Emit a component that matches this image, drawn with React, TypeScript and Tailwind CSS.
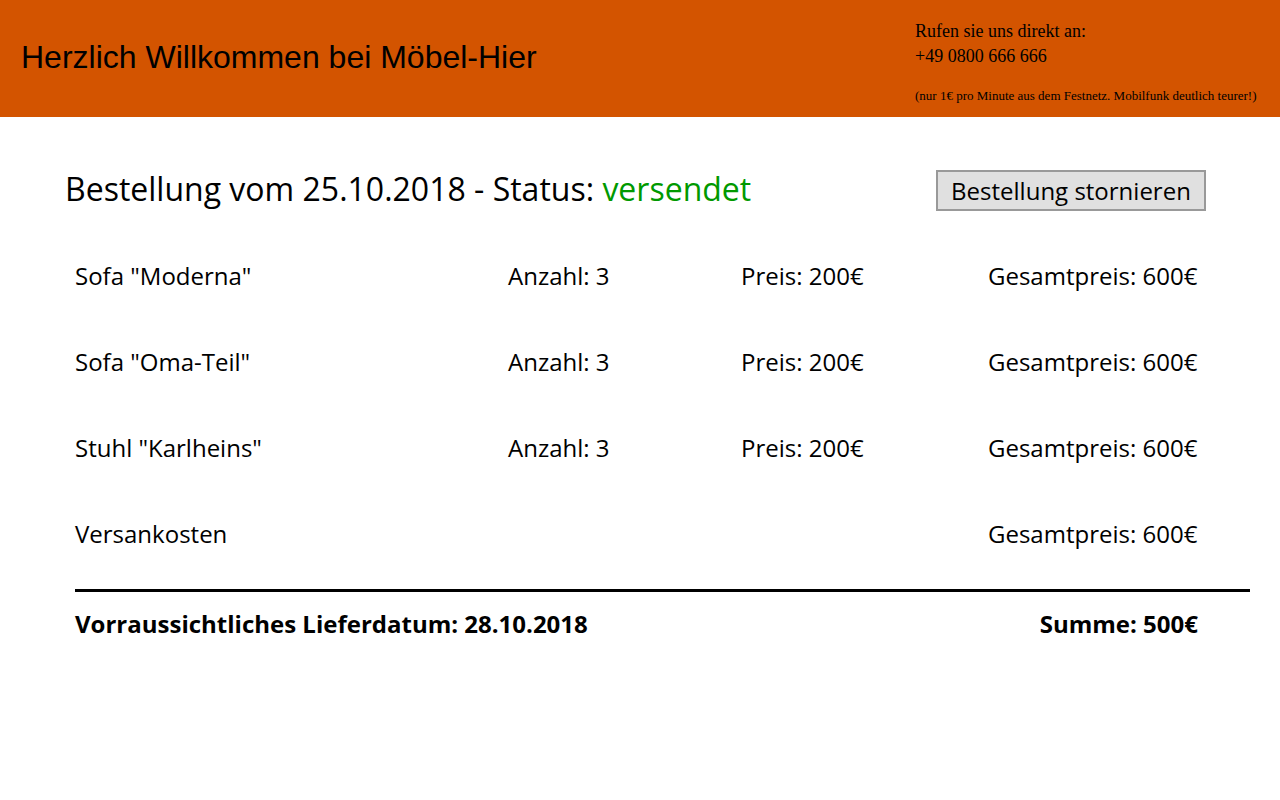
const items = [
  { name: 'Sofa "Moderna"', qty: 3, price: "200€", total: "600€" },
  { name: 'Sofa "Oma-Teil"', qty: 3, price: "200€", total: "600€" },
  { name: 'Stuhl "Karlheins"', qty: 3, price: "200€", total: "600€" },
];

const App = () => {
  return (
    <div className="min-h-[800px] bg-white text-black">
      <header className="flex h-[117px] items-start justify-between bg-[#d35400]">
        <h1 className="pl-[21px] pt-[39px] font-['Liberation_Sans',Arial,sans-serif] text-[32px] leading-[36px]">
          Herzlich Willkommen bei Möbel-Hier
        </h1>
        <div className="w-[365px] pt-[19px] font-['Liberation_Serif','Times_New_Roman',serif]">
          <p className="text-[18px] leading-[25px]">Rufen sie uns direkt an:</p>
          <p className="text-[18px] leading-[25px]">+49 0800 666 666</p>
          <p className="mt-[18px] text-[13px] leading-[18px]">
            (nur 1€ pro Minute aus dem Festnetz. Mobilfunk deutlich teurer!)
          </p>
        </div>
      </header>

      <main className="pl-[65px] pr-[74px] font-['Open_Sans',sans-serif]">
        <div className="flex items-start justify-between pt-[53px]">
          <h2 className="text-[32px] leading-[37px]">
            Bestellung vom 25.10.2018 - Status:{" "}
            <span className="text-[#009900]">versendet</span>
          </h2>
          <button className="h-[41px] w-[270px] border-2 border-[#999999] bg-[#e0e0e0] text-[24px] leading-none">
            Bestellung stornieren
          </button>
        </div>

        <div className="mt-[22px] pl-[10px]">
          {items.map((item) => (
            <div
              key={item.name}
              className="grid h-[86px] grid-cols-[433px_233px_247px_auto] items-center text-[24px]"
            >
              <span>{item.name}</span>
              <span>Anzahl: {item.qty}</span>
              <span>Preis: {item.price}</span>
              <span>Gesamtpreis: {item.total}</span>
            </div>
          ))}
          <div className="grid h-[86px] grid-cols-[913px_auto] items-center text-[24px]">
            <span>Versankosten</span>
            <span>Gesamtpreis: 600€</span>
          </div>

          <div className="mr-[-44px] mt-[12px] h-[3px] bg-black"></div>

          <div className="flex items-center justify-between pr-[8px] pt-[14px] text-[24px] font-bold">
            <span>Vorraussichtliches Lieferdatum: 28.10.2018</span>
            <span>Summe: 500€</span>
          </div>
        </div>
      </main>
    </div>
  );
};

export default App;
